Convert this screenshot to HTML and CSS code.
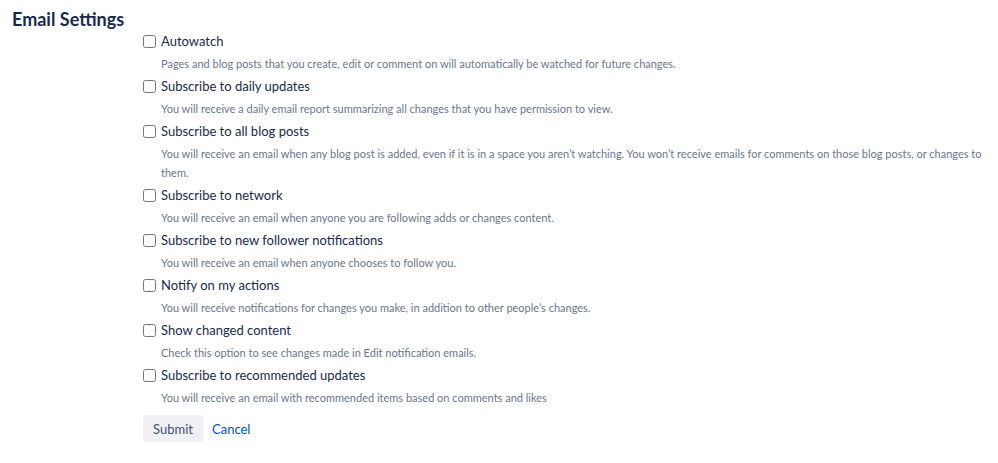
FILE: index.html
```html
<!DOCTYPE html>
<html lang="en">
<head>
    <meta charset="UTF-8">
    <meta name="viewport" content="width=device-width, initial-scale=1.0">
    <title>Email Settings</title>
    <link rel="stylesheet" href="styles.css">
</head>
<body>
    <h1 class="title">Email Settings</h1>
    <form class="settings">
        <div class="field">
            <label class="check"><input type="checkbox"> Autowatch</label>
            <p class="desc">Pages and blog posts that you create, edit or comment on will automatically be watched for future changes.</p>
        </div>
        <div class="field">
            <label class="check"><input type="checkbox"> Subscribe to daily updates</label>
            <p class="desc">You will receive a daily email report summarizing all changes that you have permission to view.</p>
        </div>
        <div class="field">
            <label class="check"><input type="checkbox"> Subscribe to all blog posts</label>
            <p class="desc">You will receive an email when any blog post is added, even if it is in a space you aren’t watching. You won’t receive emails for comments on those blog posts, or changes to them.</p>
        </div>
        <div class="field">
            <label class="check"><input type="checkbox"> Subscribe to network</label>
            <p class="desc">You will receive an email when anyone you are following adds or changes content.</p>
        </div>
        <div class="field">
            <label class="check"><input type="checkbox"> Subscribe to new follower notifications</label>
            <p class="desc">You will receive an email when anyone chooses to follow you.</p>
        </div>
        <div class="field">
            <label class="check"><input type="checkbox"> Notify on my actions</label>
            <p class="desc">You will receive notifications for changes you make, in addition to other people’s changes.</p>
        </div>
        <div class="field">
            <label class="check"><input type="checkbox"> Show changed content</label>
            <p class="desc">Check this option to see changes made in Edit notification emails.</p>
        </div>
        <div class="field">
            <label class="check"><input type="checkbox"> Subscribe to recommended updates</label>
            <p class="desc">You will receive an email with recommended items based on comments and likes</p>
        </div>
        <div class="buttons">
            <button type="button" class="submit">Submit</button>
            <a href="#" class="cancel">Cancel</a>
        </div>
    </form>
</body>
</html>
```

FILE: styles.css
```css
*{
    margin: 0;
    padding: 0;
    box-sizing: border-box;
}
body{
    font-family: Lato, 'Open Sans', sans-serif;
    color: #172b4d;
    background-color: white;
    padding: 8px 12px;
}
.title{
    font-size: 18px;
    font-weight: 700;
    line-height: 23px;
}
.settings{
    margin-left: 131px;
    width: 845px;
}
.field{
    margin-bottom: 3px;
}
.check{
    display: flex;
    align-items: center;
    font-size: 13px;
    line-height: 20px;
    height: 20px;
}
.check input{
    width: 13px;
    height: 13px;
    margin-right: 5px;
}
.desc{
    font-size: 11px;
    line-height: 19px;
    color: #6b778c;
    padding-left: 18px;
    margin-top: 3px;
}
.buttons{
    display: flex;
    align-items: center;
    gap: 9px;
    margin-top: 8px;
}
.submit{
    font-family: inherit;
    font-size: 13px;
    color: #42526e;
    background-color: #f0f1f4;
    border: none;
    border-radius: 3px;
    height: 27px;
    width: 60px;
}
.cancel{
    font-size: 13px;
    color: #0052cc;
    text-decoration: none;
}
```
